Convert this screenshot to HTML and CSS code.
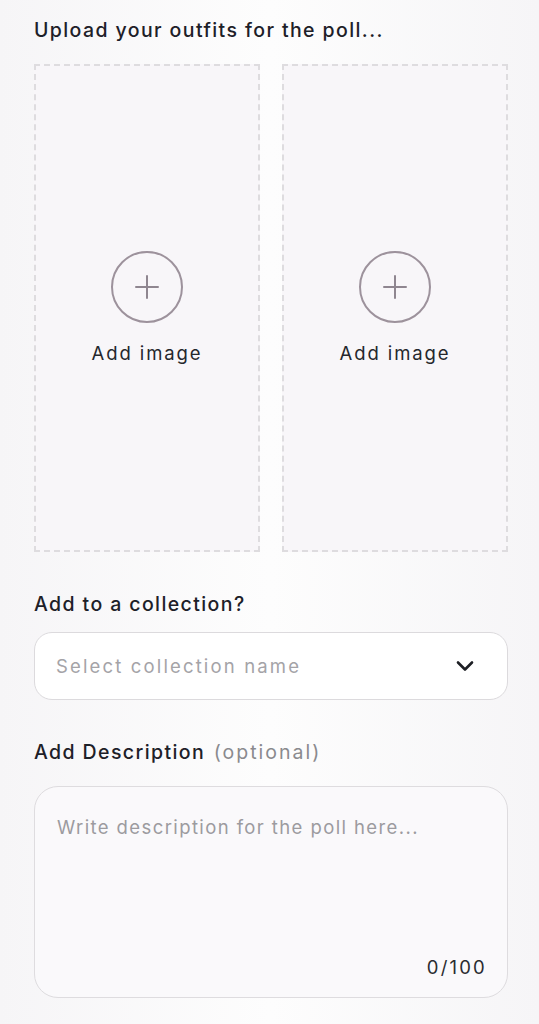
FILE: index.html
```html
<!DOCTYPE html>
<html lang="en">
<head>
  <meta charset="UTF-8" />
  <meta name="viewport" content="width=device-width, initial-scale=1.0"/>
  <title>Create poll</title>
  <link rel="stylesheet" href="styles.css">
</head>
<body>
  <div class="page">
    <h2 class="label">Upload your outfits for the poll...</h2>

    <div class="uploads">
      <div class="upload-box">
        <div class="plus-circle">
          <svg width="30" height="30" viewBox="0 0 30 30"><path d="M15 4v22M4 15h22" stroke="#8f8690" stroke-width="2" stroke-linecap="round"/></svg>
        </div>
        <span>Add image</span>
      </div>
      <div class="upload-box">
        <div class="plus-circle">
          <svg width="30" height="30" viewBox="0 0 30 30"><path d="M15 4v22M4 15h22" stroke="#8f8690" stroke-width="2" stroke-linecap="round"/></svg>
        </div>
        <span>Add image</span>
      </div>
    </div>

    <h2 class="label">Add to a collection?</h2>
    <div class="select">
      <span class="placeholder">Select collection name</span>
      <svg width="20" height="14" viewBox="0 0 20 14"><path d="M3 3.5l7 7 7-7" fill="none" stroke="#1d1f24" stroke-width="2.6" stroke-linecap="round" stroke-linejoin="round"/></svg>
    </div>

    <h2 class="label">Add Description <span class="optional">(optional)</span></h2>
    <div class="textarea">
      <span class="placeholder">Write description for the poll here...</span>
      <span class="counter">0/100</span>
    </div>
  </div>
</body>
</html>
```

FILE: styles.css
```css
body {
  margin: 0;
  background: linear-gradient(90deg, #f6f5f7 0%, #fdfdfd 50%, #f6f5f7 100%);
  font-family: Inter, "Noto Sans", sans-serif;
  color: #1d2028;
}

.page {
  padding: 16px 31px 26px 34px;
  display: flex;
  flex-direction: column;
}

.label {
  margin: 0;
  font-size: 19.5px;
  font-weight: 500;
  line-height: 28px;
  letter-spacing: 1.4px;
}

.optional {
  font-weight: 400;
  letter-spacing: 2px;
  margin-left: 2px;
  color: #8a8a8e;
}

.uploads {
  display: grid;
  grid-template-columns: 1fr 1fr;
  gap: 22px;
  margin-top: 20px;
  margin-bottom: 38px;
}

.upload-box {
  height: 488px;
  box-sizing: border-box;
  border: 2px dashed #dedcdf;
  background: #f8f6f9;
  display: flex;
  flex-direction: column;
  align-items: center;
  justify-content: center;
  gap: 18px;
  font-size: 18.5px;
  line-height: 24px;
  letter-spacing: 1.9px;
  color: #25272c;
}

.plus-circle {
  width: 72px;
  height: 72px;
  box-sizing: border-box;
  border: 2px solid #9d929c;
  border-radius: 50%;
  display: flex;
  align-items: center;
  justify-content: center;
}

.select {
  margin-top: 14px;
  margin-bottom: 38px;
  height: 68px;
  box-sizing: border-box;
  border: 1px solid #dcdadd;
  border-radius: 18px;
  background: #fff;
  display: flex;
  align-items: center;
  justify-content: space-between;
  padding: 0 32px 0 21px;
}

.placeholder {
  font-size: 18.5px;
  line-height: 24px;
  letter-spacing: 2.15px;
  color: #a4a3a7;
}

.textarea {
  margin-top: 20px;
  height: 212px;
  box-sizing: border-box;
  border: 1px solid #dedcdf;
  border-radius: 24px;
  background: #faf9fb;
  display: flex;
  flex-direction: column;
  justify-content: space-between;
  padding: 28px 22px 18px 22px;
}

.textarea .placeholder {
  color: #9c9b9f;
  letter-spacing: 1.4px;
}

.counter {
  align-self: flex-end;
  font-size: 18.5px;
  line-height: 24px;
  letter-spacing: 2.2px;
  margin-right: -2px;
  color: #2a2c30;
}
```
